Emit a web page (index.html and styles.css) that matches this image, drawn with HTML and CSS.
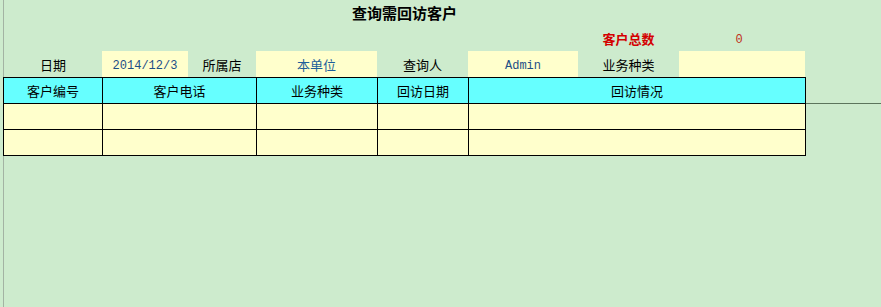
FILE: index.html
```html
<!DOCTYPE html>
<html lang="zh-CN">
<head>
    <meta charset="UTF-8">
    <title>查询需回访客户</title>
    <link rel="stylesheet" href="styles.css">
</head>
<body>
    <div class="sheet">
        <div class="title-row">查询需回访客户</div>

        <div class="summary-row">
            <div class="sum-label">客户总数</div>
            <div class="sum-value">0</div>
        </div>

        <div class="filter-row">
            <div class="label">日期</div>
            <div class="field mono">2014/12/3</div>
            <div class="label">所属店</div>
            <div class="field blue">本单位</div>
            <div class="label">查询人</div>
            <div class="field mono">Admin</div>
            <div class="label">业务种类</div>
            <div class="field"></div>
        </div>

        <div class="grid-wrap">
            <table class="grid">
                <colgroup>
                    <col style="width: 99px">
                    <col style="width: 154px">
                    <col style="width: 121px">
                    <col style="width: 91px">
                    <col style="width: 337px">
                </colgroup>
                <tr class="head">
                    <td>客户编号</td>
                    <td>客户电话</td>
                    <td>业务种类</td>
                    <td>回访日期</td>
                    <td>回访情况</td>
                </tr>
                <tr>
                    <td></td><td></td><td></td><td></td><td></td>
                </tr>
                <tr>
                    <td></td><td></td><td></td><td></td><td></td>
                </tr>
            </table>
            <div class="tail"></div>
        </div>
    </div>
</body>
</html>
```

FILE: styles.css
```css
html, body {
    margin: 0;
    height: 100%;
}

body {
    background: #cdebcd;
    font-family: "Noto Sans CJK SC", "DejaVu Sans", sans-serif;
    font-size: 13px;
    color: #000;
    overflow: hidden;
}

.sheet {
    margin-left: 3px;
    min-height: 100vh;
    border-left: 1px solid #a3b3a3;
}

.title-row {
    width: 801px;
    height: 25px;
    line-height: 25px;
    text-align: center;
    font-size: 15px;
    font-weight: bold;
}

.summary-row {
    display: flex;
    height: 26px;
    align-items: center;
    padding-left: 574px;
}

.sum-label {
    width: 101px;
    text-align: center;
    color: #d40000;
    font-weight: bold;
}

.sum-value {
    width: 120px;
    padding-top: 3px;
    text-align: center;
    color: #c03020;
    font-family: "Liberation Mono", monospace;
    font-size: 12px;
}

.filter-row {
    display: grid;
    grid-template-columns: 98px 86px 68px 121px 91px 110px 101px 126px;
    height: 26px;
}

.label,
.field {
    display: flex;
    align-items: center;
    justify-content: center;
}

.field {
    background: #ffffcc;
}

.mono {
    padding-top: 4px;
    font-family: "Liberation Mono", monospace;
    font-size: 12px;
    color: #1d4f86;
}

.blue {
    color: #1d5f9a;
}

.grid-wrap {
    display: flex;
    align-items: flex-start;
    margin-left: -1px;
}

.grid {
    border-collapse: collapse;
    table-layout: fixed;
    width: 802px;
}

.grid td {
    border: 1px solid #000;
    height: 25px;
    padding: 0;
    background: #ffffcc;
    text-align: center;
}

.grid .head td {
    background: #66ffff;
}

.tail {
    flex: 1;
    height: 26px;
    border-bottom: 1px solid #5c745c;
}
```
